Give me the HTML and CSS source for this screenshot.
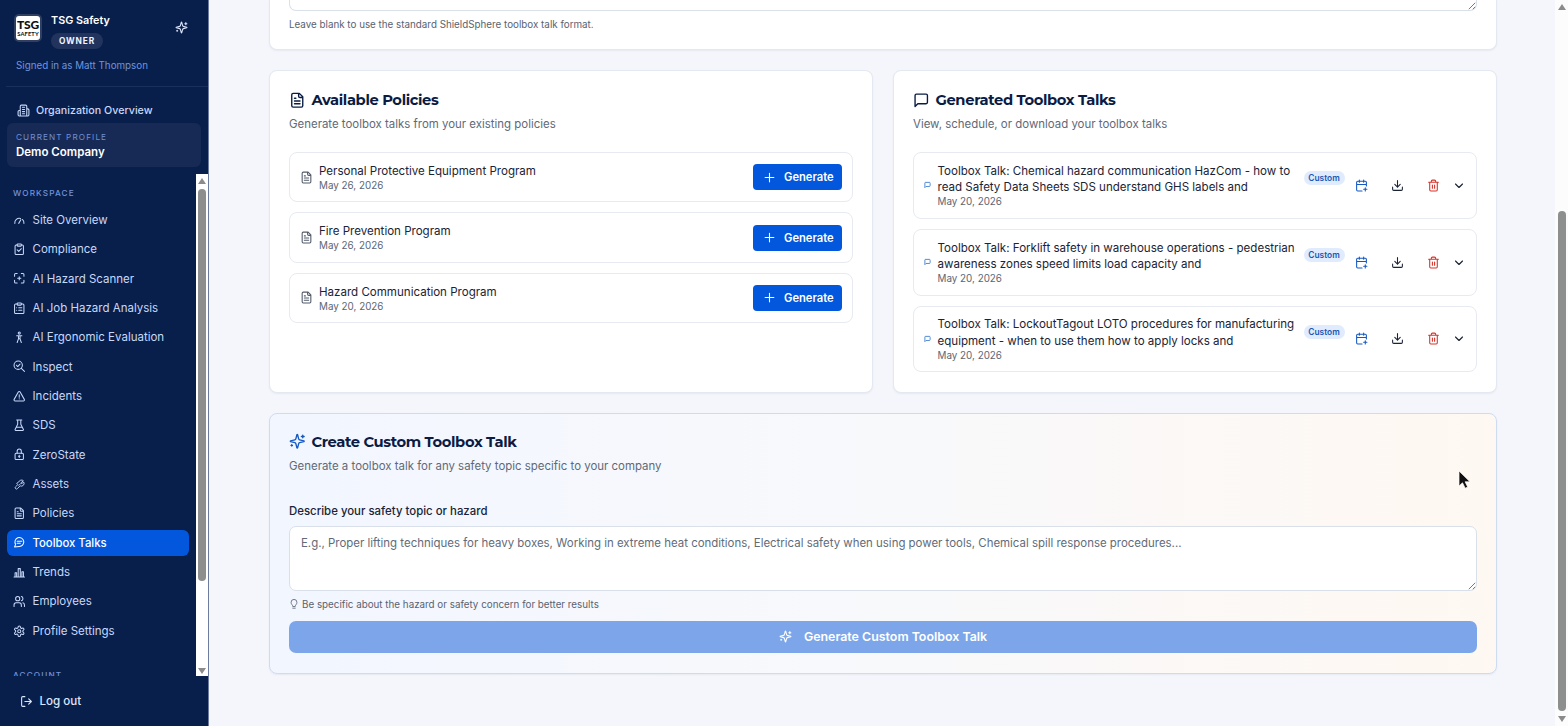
FILE: index.html
```html
<!DOCTYPE html>
<html lang="en">
<head>
<meta charset="utf-8">
<title>Toolbox Talks</title>
<link rel="stylesheet" href="styles.css">
</head>
<body>
<svg class="defs" aria-hidden="true">
  <symbol id="sparkles" viewBox="0 0 24 24"><path d="M9.94 15.5A2 2 0 0 0 8.5 14.06l-6.14-1.58a.5.5 0 0 1 0-.96L8.5 9.94A2 2 0 0 0 9.94 8.5l1.58-6.14a.5.5 0 0 1 .96 0l1.58 6.14a2 2 0 0 0 1.44 1.44l6.14 1.58a.5.5 0 0 1 0 .96l-6.14 1.58a2 2 0 0 0-1.44 1.44l-1.58 6.14a.5.5 0 0 1-.96 0zM20 3v4M22 5h-4M4 17v2M5 18H3"/></symbol>
  <symbol id="building" viewBox="0 0 24 24"><path d="M6 22V4a2 2 0 0 1 2-2h8a2 2 0 0 1 2 2v18zM6 12H4a2 2 0 0 0-2 2v6a2 2 0 0 0 2 2h2M18 9h2a2 2 0 0 1 2 2v9a2 2 0 0 1-2 2h-2M10 6h4M10 10h4M10 14h4M10 18h4"/></symbol>
  <symbol id="gauge" viewBox="0 0 24 24"><path d="m11 18 4-7M3.500 18a8.700 8.700 0 0 1 11-9.500M18 10.500a8.700 8.700 0 0 1 3 7.500"/></symbol>
  <symbol id="clipcheck" viewBox="0 0 24 24"><rect x="8" y="2" width="8" height="4" rx="1"/><path d="M16 4h2a2 2 0 0 1 2 2v14a2 2 0 0 1-2 2H6a2 2 0 0 1-2-2V6a2 2 0 0 1 2-2h2M8 13l3 3 5-5"/></symbol>
  <symbol id="scan" viewBox="0 0 24 24"><path d="M3 8V5a2 2 0 0 1 2-2h3M16 3h3a2 2 0 0 1 2 2v3M21 16v3a2 2 0 0 1-2 2h-3M8 21H5a2 2 0 0 1-2-2v-3M12 9v6M9 12h6"/></symbol>
  <symbol id="cliplist" viewBox="0 0 24 24"><rect x="8" y="2" width="8" height="4" rx="1"/><path d="M16 4h3a2 2 0 0 1 2 2v14a2 2 0 0 1-2 2H5a2 2 0 0 1-2-2V6a2 2 0 0 1 2-2h3M11 11h6M11 16h6M7 11h.01M7 16h.01"/></symbol>
  <symbol id="person" viewBox="0 0 24 24"><circle cx="12" cy="4" r="2"/><path d="M7 9h10M10.500 9v6L8 22M13.500 9v6l2.500 7M10.500 15h3"/></symbol>
  <symbol id="inspect" viewBox="0 0 24 24"><circle cx="10" cy="10" r="8"/><path d="m16 16 6 6M6.500 10l2.500 2.500 4.500-4.500"/></symbol>
  <symbol id="alert" viewBox="0 0 24 24"><path d="m21.700 18-8-14a2 2 0 0 0-3.500 0l-8 14A2 2 0 0 0 4 21h16a2 2 0 0 0 1.700-3zM12 9v5M12 17h.01"/></symbol>
  <symbol id="flask" viewBox="0 0 24 24"><path d="M9 2v8L4 20a1.400 1.400 0 0 0 1.200 2h13.600a1.400 1.400 0 0 0 1.200-2l-5-10V2M7 2h10M7 16h10"/></symbol>
  <symbol id="lock" viewBox="0 0 24 24"><rect x="4" y="10" width="16" height="12" rx="2"/><path d="M8 10V6a4 4 0 0 1 8 0v4M12 14v4M10.500 16h3"/></symbol>
  <symbol id="wrench" viewBox="0 0 24 24"><path d="M11 6a6 6 0 0 1 10-2l-5 4 1 2 5-3a6 6 0 0 1-8 8l-6 6a2.500 2.500 0 0 1-4-4l5-5-2-2zM11 14l4-4"/></symbol>
  <symbol id="file" viewBox="0 0 24 24"><path d="M15 2H6a2 2 0 0 0-2 2v16a2 2 0 0 0 2 2h12a2 2 0 0 0 2-2V7zM14 2v4a2 2 0 0 0 2 2h4M10 9H8M16 13H8M16 17H8"/></symbol>
  <symbol id="chat" viewBox="0 0 24 24"><path d="M3 21l2-5a8.500 8.500 0 1 1 7 4zM8 10h9M8 14h6"/></symbol>
  <symbol id="bars" viewBox="0 0 24 24"><path d="M2 21h20M4 20v-7h3v7M10 20V5h4v15M17 20v-9h3v9"/></symbol>
  <symbol id="users" viewBox="0 0 24 24"><path d="M16 22v-3a4 4 0 0 0-4-4H6a4 4 0 0 0-4 4v3M16 3.100a4 4 0 0 1 0 7.800M22 22v-3a4 4 0 0 0-3-3.900"/><circle cx="9" cy="7" r="4"/></symbol>
  <symbol id="gear" viewBox="0 0 24 24"><path d="M12.220 2h-.44a2 2 0 0 0-2 2v.18a2 2 0 0 1-1 1.730l-.43.25a2 2 0 0 1-2 0l-.15-.08a2 2 0 0 0-2.730.73l-.22.38a2 2 0 0 0 .73 2.730l.15.1a2 2 0 0 1 1 1.720v.51a2 2 0 0 1-1 1.740l-.15.09a2 2 0 0 0-.73 2.730l.22.38a2 2 0 0 0 2.730.73l.15-.08a2 2 0 0 1 2 0l.43.25a2 2 0 0 1 1 1.730V20a2 2 0 0 0 2 2h.44a2 2 0 0 0 2-2v-.18a2 2 0 0 1 1-1.730l.43-.25a2 2 0 0 1 2 0l.15.08a2 2 0 0 0 2.730-.73l.22-.39a2 2 0 0 0-.73-2.730l-.15-.08a2 2 0 0 1-1-1.740v-.5a2 2 0 0 1 1-1.740l.15-.09a2 2 0 0 0 .73-2.730l-.22-.38a2 2 0 0 0-2.730-.73l-.15.08a2 2 0 0 1-2 0l-.43-.25a2 2 0 0 1-1-1.730V4a2 2 0 0 0-2-2z"/><circle cx="12" cy="12" r="3"/></symbol>
  <symbol id="logout" viewBox="0 0 24 24"><path d="M9 21H5a2 2 0 0 1-2-2V5a2 2 0 0 1 2-2h4M16 17l5-5-5-5M21 12H9"/></symbol>
  <symbol id="message" viewBox="0 0 24 24"><path d="M21 15a2 2 0 0 1-2 2H7l-4 4V5a2 2 0 0 1 2-2h14a2 2 0 0 1 2 2z"/></symbol>
  <symbol id="plus" viewBox="0 0 24 24"><path d="M4 12h16M12 4v16"/></symbol>
  <symbol id="calplus" viewBox="0 0 24 24"><path d="M8 2v4M16 2v4M21 13V6a2 2 0 0 0-2-2H5a2 2 0 0 0-2 2v14a2 2 0 0 0 2 2h8M3 10h18M16 19h6M19 16v6"/></symbol>
  <symbol id="download" viewBox="0 0 24 24"><path d="M21 15v4a2 2 0 0 1-2 2H5a2 2 0 0 1-2-2v-4M7 10l5 5 5-5M12 15V3"/></symbol>
  <symbol id="trash" viewBox="0 0 24 24"><path d="M3 6h18M19 6v14a2 2 0 0 1-2 2H7a2 2 0 0 1-2-2V6M8 6V4a2 2 0 0 1 2-2h4a2 2 0 0 1 2 2v2M10 11v6M14 11v6"/></symbol>
  <symbol id="chevron" viewBox="0 0 24 24"><path d="m5 9 7 7 7-7"/></symbol>
  <symbol id="bulb" viewBox="0 0 24 24"><path d="M9 17c0-3-4-4-4-9a7 7 0 0 1 14 0c0 5-4 6-4 9zM9 22h6"/></symbol>
  <symbol id="grip" viewBox="0 0 10 10"><path d="M1 9l8-8M6 9l3-3"/></symbol>
</svg>
<div class="app">
  <aside class="sidebar">
    <header class="brand">
      <div class="logo"><b>TSG</b><span>SAFETY</span></div>
      <div class="brand-text"><div class="brand-name">TSG Safety</div><span class="role">OWNER</span></div>
      <svg class="icon brand-spark"><use href="#sparkles"/></svg>
    </header>
    <p class="signed">Signed in as Matt Thompson</p>
    <div class="org"><svg class="icon"><use href="#building"/></svg><span>Organization Overview</span></div>
    <div class="profile"><div class="profile-label">CURRENT PROFILE</div><div class="profile-name">Demo Company</div></div>
    <div class="nav-wrap">
      <nav class="nav">
        <div class="nav-label">WORKSPACE</div>
        <a class="item"><svg class="icon"><use href="#gauge"/></svg><span>Site Overview</span></a>
        <a class="item"><svg class="icon"><use href="#clipcheck"/></svg><span>Compliance</span></a>
        <a class="item"><svg class="icon"><use href="#scan"/></svg><span>AI Hazard Scanner</span></a>
        <a class="item"><svg class="icon"><use href="#cliplist"/></svg><span>AI Job Hazard Analysis</span></a>
        <a class="item"><svg class="icon"><use href="#person"/></svg><span>AI Ergonomic Evaluation</span></a>
        <a class="item"><svg class="icon"><use href="#inspect"/></svg><span>Inspect</span></a>
        <a class="item"><svg class="icon"><use href="#alert"/></svg><span>Incidents</span></a>
        <a class="item"><svg class="icon"><use href="#flask"/></svg><span>SDS</span></a>
        <a class="item"><svg class="icon"><use href="#lock"/></svg><span>ZeroState</span></a>
        <a class="item"><svg class="icon short"><use href="#wrench"/></svg><span>Assets</span></a>
        <a class="item"><svg class="icon"><use href="#file"/></svg><span>Policies</span></a>
        <a class="item active"><svg class="icon"><use href="#chat"/></svg><span>Toolbox Talks</span></a>
        <a class="item"><svg class="icon"><use href="#bars"/></svg><span>Trends</span></a>
        <a class="item"><svg class="icon"><use href="#users"/></svg><span>Employees</span></a>
        <a class="item"><svg class="icon"><use href="#gear"/></svg><span>Profile Settings</span></a>
        <div class="nav-label account">ACCOUNT</div>
      </nav>
      <div class="scroll side-scroll"><i class="up"></i><i class="thumb"></i><i class="down"></i></div>
    </div>
    <div class="logout"><svg class="icon"><use href="#logout"/></svg><span>Log out</span></div>
  </aside>
  <main class="main">
    <section class="card top-card">
      <div class="area area-end"><svg class="grip"><use href="#grip"/></svg></div>
      <p class="help">Leave blank to use the standard ShieldSphere toolbox talk format.</p>
    </section>
    <div class="columns">
      <section class="card">
        <h2><svg class="icon"><use href="#file"/></svg><span>Available Policies</span></h2>
        <p class="sub">Generate toolbox talks from your existing policies</p>
        <div class="list">
          <div class="row"><svg class="icon row-file"><use href="#file"/></svg><div class="info"><div class="title">Personal Protective Equipment Program</div><div class="date">May 26, 2026</div></div><button class="gen"><svg class="icon"><use href="#plus"/></svg><span>Generate</span></button></div>
          <div class="row"><svg class="icon row-file"><use href="#file"/></svg><div class="info"><div class="title">Fire Prevention Program</div><div class="date">May 26, 2026</div></div><button class="gen"><svg class="icon"><use href="#plus"/></svg><span>Generate</span></button></div>
          <div class="row"><svg class="icon row-file"><use href="#file"/></svg><div class="info"><div class="title">Hazard Communication Program</div><div class="date">May 20, 2026</div></div><button class="gen"><svg class="icon"><use href="#plus"/></svg><span>Generate</span></button></div>
        </div>
      </section>
      <section class="card">
        <h2><svg class="icon"><use href="#message"/></svg><span>Generated Toolbox Talks</span></h2>
        <p class="sub">View, schedule, or download your toolbox talks</p>
        <div class="list">
          <div class="row talk"><svg class="icon row-msg"><use href="#message"/></svg><div class="info"><div class="title">Toolbox Talk: Chemical hazard communication HazCom - how to<br>read Safety Data Sheets SDS understand GHS labels and</div><div class="date">May 20, 2026</div></div><span class="tag">Custom</span><div class="acts"><svg class="icon blue"><use href="#calplus"/></svg><svg class="icon"><use href="#download"/></svg><svg class="icon red"><use href="#trash"/></svg><svg class="icon chev"><use href="#chevron"/></svg></div></div>
          <div class="row talk"><svg class="icon row-msg"><use href="#message"/></svg><div class="info"><div class="title">Toolbox Talk: Forklift safety in warehouse operations - pedestrian<br>awareness zones speed limits load capacity and</div><div class="date">May 20, 2026</div></div><span class="tag">Custom</span><div class="acts"><svg class="icon blue"><use href="#calplus"/></svg><svg class="icon"><use href="#download"/></svg><svg class="icon red"><use href="#trash"/></svg><svg class="icon chev"><use href="#chevron"/></svg></div></div>
          <div class="row talk"><svg class="icon row-msg"><use href="#message"/></svg><div class="info"><div class="title">Toolbox Talk: LockoutTagout LOTO procedures for manufacturing<br>equipment - when to use them how to apply locks and</div><div class="date">May 20, 2026</div></div><span class="tag">Custom</span><div class="acts"><svg class="icon blue"><use href="#calplus"/></svg><svg class="icon"><use href="#download"/></svg><svg class="icon red"><use href="#trash"/></svg><svg class="icon chev"><use href="#chevron"/></svg></div></div>
        </div>
      </section>
    </div>
    <section class="card custom">
      <h2><svg class="icon blue"><use href="#sparkles"/></svg><span>Create Custom Toolbox Talk</span></h2>
      <p class="sub">Generate a toolbox talk for any safety topic specific to your company</p>
      <div class="label">Describe your safety topic or hazard</div>
      <div class="area"><span>E.g., Proper lifting techniques for heavy boxes, Working in extreme heat conditions, Electrical safety when using power tools, Chemical spill response procedures...</span><svg class="grip"><use href="#grip"/></svg></div>
      <p class="help tip"><svg class="icon"><use href="#bulb"/></svg><span>Be specific about the hazard or safety concern for better results</span></p>
      <button class="submit"><svg class="icon"><use href="#sparkles"/></svg><span>Generate Custom Toolbox Talk</span></button>
    </section>
  </main>
  <div class="scroll page-scroll"><i class="up"></i><i class="thumb"></i><i class="down"></i></div>
</div>
<svg class="cursor" viewBox="0 0 13 19"><path d="M1 1v15l3.500-3.200 2.700 5.400 2.500-1.200-2.600-5.200H12z"/></svg>
</body>
</html>
```

FILE: styles.css
```css
* { box-sizing: border-box; }
body { margin: 0; height: 726px; overflow: hidden; font-family: Inter, "Liberation Sans", sans-serif; font-size: 11.6px; color: #1b2435; background: #f4f6fb; }
p, h2 { margin: 0; }
.defs { position: absolute; width: 0; height: 0; }
.icon { width: 13px; height: 13px; flex: none; fill: none; stroke: currentColor; stroke-width: 2; stroke-linecap: round; stroke-linejoin: round; }
.app { display: flex; height: 726px; }

.sidebar { width: 209px; flex: none; height: 726px; background: #081f4b; color: #c8d8f8; display: flex; flex-direction: column; border-right: 1px solid #6d7b9c; white-space: nowrap; }
.brand { display: flex; height: 57px; padding: 14px 0 0 14px; }
.logo { width: 28px; height: 28px; border: 2px solid #303f60; border-radius: 5px; background: #fff; color: #111; display: flex; flex-direction: column; align-items: center; justify-content: center; }
.logo b { font: 900 12px/11px Lato, sans-serif; letter-spacing: -.2px; }
.logo span { font: 700 5.800px/7px Lato, sans-serif; letter-spacing: .1px; }
.brand-text { margin-left: 9px; width: 125px; }
.brand-name { font-weight: 600; font-size: 10.800px; line-height: 13px; color: #fff; }
.role { display: block; width: 52px; height: 16px; margin-top: 6px; border-radius: 8px; background: #22345d; color: #f1f5ff; font-weight: 700; font-size: 8.300px; line-height: 16px; letter-spacing: .85px; text-align: center; }
.brand-spark { margin-top: 7px; margin-left: -1px; color: #dce6fc; }
.signed { margin: 0 0 0 6px; padding: 0 0 0 10px; height: 30px; border-bottom: 1px solid #18305c; font-size: 9.800px; line-height: 17px; color: #7094dd; }
.org { display: flex; align-items: center; gap: 6px; height: 27px; margin-top: 10px; padding-left: 17px; font-weight: 500; font-size: 10.700px; }
.profile { margin: -1px 7px 0; height: 44px; padding: 9px 9px 0; border-radius: 6px; background: #172a55; }
.profile-label { font-size: 8.200px; line-height: 11px; letter-spacing: 1.100px; color: #6f8fd6; }
.profile-name { font-weight: 600; font-size: 11.500px; line-height: 17px; color: #fff; margin-top: 1px; }
.nav-wrap { display: flex; margin-top: 7px; height: 503px; overflow: hidden; }
.nav { flex: 1; padding: 13px 7px 0; overflow: hidden; }
.nav-label { height: 13px; padding-left: 6px; margin-bottom: 6.800px; font-size: 8.200px; line-height: 13px; letter-spacing: 1.120px; color: #7593d8; font-weight: 500; }
.item { display: flex; align-items: center; gap: 7px; height: 26.400px; margin-bottom: 2.980px; padding-left: 6px; border-radius: 6px; font-size: 11.500px; }
.item .icon { width: 12.500px; height: 12.500px; }
.item .short { height: 11px; }
.active { background: #0257dc; color: #fff; font-weight: 500; font-size: 11.300px; }
.account { margin-top: 25px; }
.logout { display: flex; align-items: center; gap: 7px; padding: 0 0 0 19.500px; height: 50px; font-weight: 500; font-size: 11.600px; color: #dce6fb; }

.scroll { display: flex; flex-direction: column; align-items: center; flex: none; }
.up, .down { width: 0; height: 0; border: 4px solid transparent; }
.up { border-top: 0; border-bottom: 6px solid #8b8b8b; }
.down { border-bottom: 0; border-top: 6px solid #8b8b8b; }
.thumb { width: 8px; border-radius: 4px; background: #8d8e8e; }
.side-scroll { width: 12px; background: #fff; padding-top: 4px; }
.side-scroll .thumb { height: 392px; margin: 5px 0 87px; }
.page-scroll { width: 13px; background: #fcfcfc; padding-top: 4px; padding-left: 1px; }
.page-scroll .thumb { height: 500px; margin: 201px 0 5px; }

.main { flex: 1; padding: 0 58px 0 60px; display: flex; flex-direction: column; gap: 20px; }
.card { background: #fff; border: 1px solid #e4e8f0; border-radius: 8px; padding: 20px 19px; box-shadow: 0 1px 2px rgba(20,40,80,.06); }
.top-card { height: 50px; flex: none; padding-top: 0; border-top: 0; border-radius: 0 0 8px 8px; }
.area { position: relative; height: 65px; padding: 8px 11px; border: 1px solid #d9e0ea; border-radius: 7px; background: #fff; color: #626b79; font-size: 11.450px; line-height: 16px; white-space: nowrap; }
.area-end { height: 10.500px; padding: 0; border-top: 0; border-radius: 0 0 7px 7px; }
.grip { position: absolute; right: 0; bottom: 0; width: 8px; height: 8px; stroke: #555; stroke-width: 1; fill: none; }
.help { margin-top: 6px; font-size: 9.820px; line-height: 14px; color: #596270; }
.columns { display: grid; grid-template-columns: 1fr 1fr; gap: 20px; height: 323px; flex: none; }
h2 { display: flex; align-items: center; gap: 6px; height: 18px; font: 700 14.700px/18px Montserrat, Inter, sans-serif; letter-spacing: -.36px; color: #0a1c43; white-space: nowrap; }
h2 .icon { width: 16.500px; height: 16.500px; }
.blue { color: #1459c4; }
.sub { margin-top: 7px; font-size: 11.450px; line-height: 16px; color: #606977; }
.list { display: flex; flex-direction: column; gap: 10px; margin-top: 20px; }
.row { display: flex; align-items: center; height: 50.400px; border: 1px solid #e7eaf0; border-radius: 8px; padding: 0 10px; }
.row-file { color: #535c6b; margin-right: 6px; }
.info { flex: 1; white-space: nowrap; }
.title { font-size: 11.560px; line-height: 16.300px; color: #1b2435; }
.date { font-size: 9.850px; line-height: 12.500px; color: #5d6674; }
button { font-family: inherit; border: 0; color: #fff; font-weight: 600; display: flex; align-items: center; }
.gen { width: 89px; height: 26px; padding: 0 10px; gap: 8px; border-radius: 4px; background: #0257dc; font-size: 11.200px; }
.talk { height: 66.800px; padding-left: 10px; }
.row-msg { width: 7px; height: 8px; stroke-width: 2.600; margin-right: 6.500px; color: #1d68c8; }
.talk .info { flex: none; width: 366px; }
.tag { align-self: flex-start; margin-top: 18px; width: 41px; height: 14px; border-radius: 7px; background: #e0ecfd; color: #1858b4; font-weight: 600; font-size: 8.400px; line-height: 14px; text-align: center; }
.acts { display: flex; align-items: center; margin-left: 10px; gap: 23px; color: #1b2435; }
.red { color: #d7352c; }
.acts .chev { width: 12px; margin-left: -9.500px; stroke-width: 2.300; }
.custom { height: 261.500px; margin-top: -.500px; flex: none; padding-top: 19px; border-color: #cddcf1; background: linear-gradient(90deg, #f2f6ff 0%, #f8f9fb 50%, #fff8f2 100%); }
.label { margin-top: 29px; margin-bottom: 7px; font-size: 11.420px; line-height: 16px; font-weight: 500; }
.tip { display: flex; align-items: center; gap: 3px; margin-bottom: 10px; }
.tip .icon { width: 10px; height: 10px; }
.submit { width: 100%; height: 32.500px; justify-content: center; gap: 12px; background: #7ca6e9; border-radius: 7px; font-size: 12.400px; }
.cursor { position: absolute; left: 1458px; top: 469.500px; width: 13px; height: 19px; fill: #111; stroke: #fff; stroke-width: .7; }
```
